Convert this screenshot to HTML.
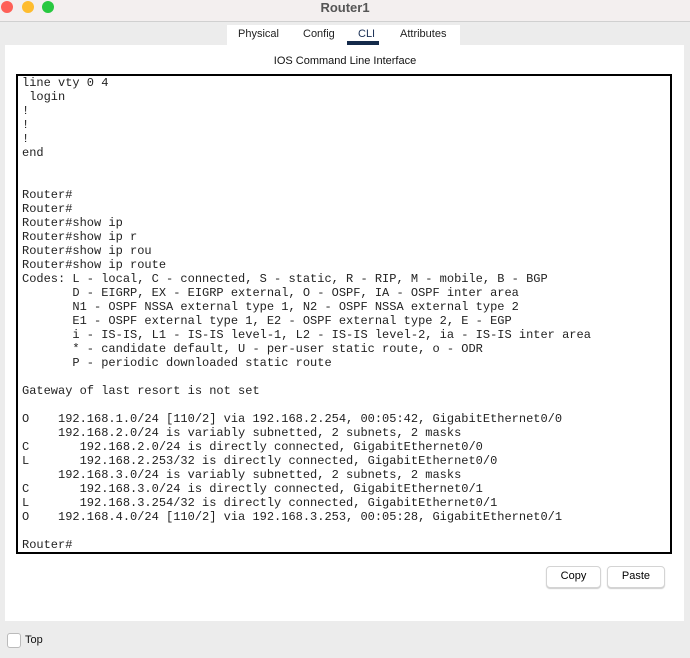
<!DOCTYPE html>
<html><head><style>
body{margin:0;width:690px;height:658px;background:#ececec;font-family:"Liberation Sans",sans-serif;position:relative;overflow:hidden}
.title{position:absolute;left:0;top:0;width:690px;height:21px;background:#f3efef;border-bottom:1px solid #d0d0d0;text-align:center;font-size:13px;font-weight:bold;color:#555;line-height:15px}
.dot{position:absolute;top:1px;width:12px;height:12px;border-radius:50%}
.tabs{position:absolute;left:227px;top:25px;width:233px;height:21px;background:#fff;font-size:11px;color:#222}
.tabs span{position:absolute;top:3px}
.panel{position:absolute;left:5px;top:45px;width:679px;height:576px;background:#fff}
.term{position:absolute;left:16px;top:74px;width:652px;height:476px;border:2px solid #000;background:#fff}
pre{margin:0;position:absolute;left:4px;top:0px;font-family:"Liberation Mono",monospace;font-size:12px;line-height:14px;color:#222}
.btn{position:absolute;top:566px;height:20px;border:1px solid #d4d4d4;border-radius:4px;background:#fff;font-size:11px;text-align:center;line-height:19px;box-shadow:0 1px 1px #ccc}
</style></head><body>
<div class="title">Router1<div class="dot" style="left:1px;background:#fe5f57"></div><div class="dot" style="left:22px;background:#febc2e"></div><div class="dot" style="left:42px;background:#28c840"></div></div>
<div class="tabs"><span style="left:11px">Physical</span><span style="left:76px">Config</span><span style="left:131px;color:#1a2f55">CLI</span><span style="left:173px">Attributes</span><div style="position:absolute;left:120px;top:16px;width:32px;height:4px;background:#142a4a"></div></div>
<div class="panel"></div>
<div style="position:absolute;left:0;width:690px;top:55px;text-align:center;font-size:11px;color:#111">IOS Command Line Interface</div>
<div class="term"><pre>line vty 0 4
 login
!
!
!
end


Router#
Router#
Router#show ip
Router#show ip r
Router#show ip rou
Router#show ip route
Codes: L - local, C - connected, S - static, R - RIP, M - mobile, B - BGP
       D - EIGRP, EX - EIGRP external, O - OSPF, IA - OSPF inter area
       N1 - OSPF NSSA external type 1, N2 - OSPF NSSA external type 2
       E1 - OSPF external type 1, E2 - OSPF external type 2, E - EGP
       i - IS-IS, L1 - IS-IS level-1, L2 - IS-IS level-2, ia - IS-IS inter area
       * - candidate default, U - per-user static route, o - ODR
       P - periodic downloaded static route

Gateway of last resort is not set

O    192.168.1.0/24 [110/2] via 192.168.2.254, 00:05:42, GigabitEthernet0/0
     192.168.2.0/24 is variably subnetted, 2 subnets, 2 masks
C       192.168.2.0/24 is directly connected, GigabitEthernet0/0
L       192.168.2.253/32 is directly connected, GigabitEthernet0/0
     192.168.3.0/24 is variably subnetted, 2 subnets, 2 masks
C       192.168.3.0/24 is directly connected, GigabitEthernet0/1
L       192.168.3.254/32 is directly connected, GigabitEthernet0/1
O    192.168.4.0/24 [110/2] via 192.168.3.253, 00:05:28, GigabitEthernet0/1

Router#</pre></div>
<div class="btn" style="left:546px;width:53px">Copy</div>
<div class="btn" style="left:607px;width:56px">Paste</div>
<div style="position:absolute;left:7px;top:633px;width:12px;height:13px;border:1px solid #bbb;border-radius:3px;background:#fff"></div>
<div style="position:absolute;left:25px;top:634px;font-size:11px;color:#111">Top</div>
</body></html>
